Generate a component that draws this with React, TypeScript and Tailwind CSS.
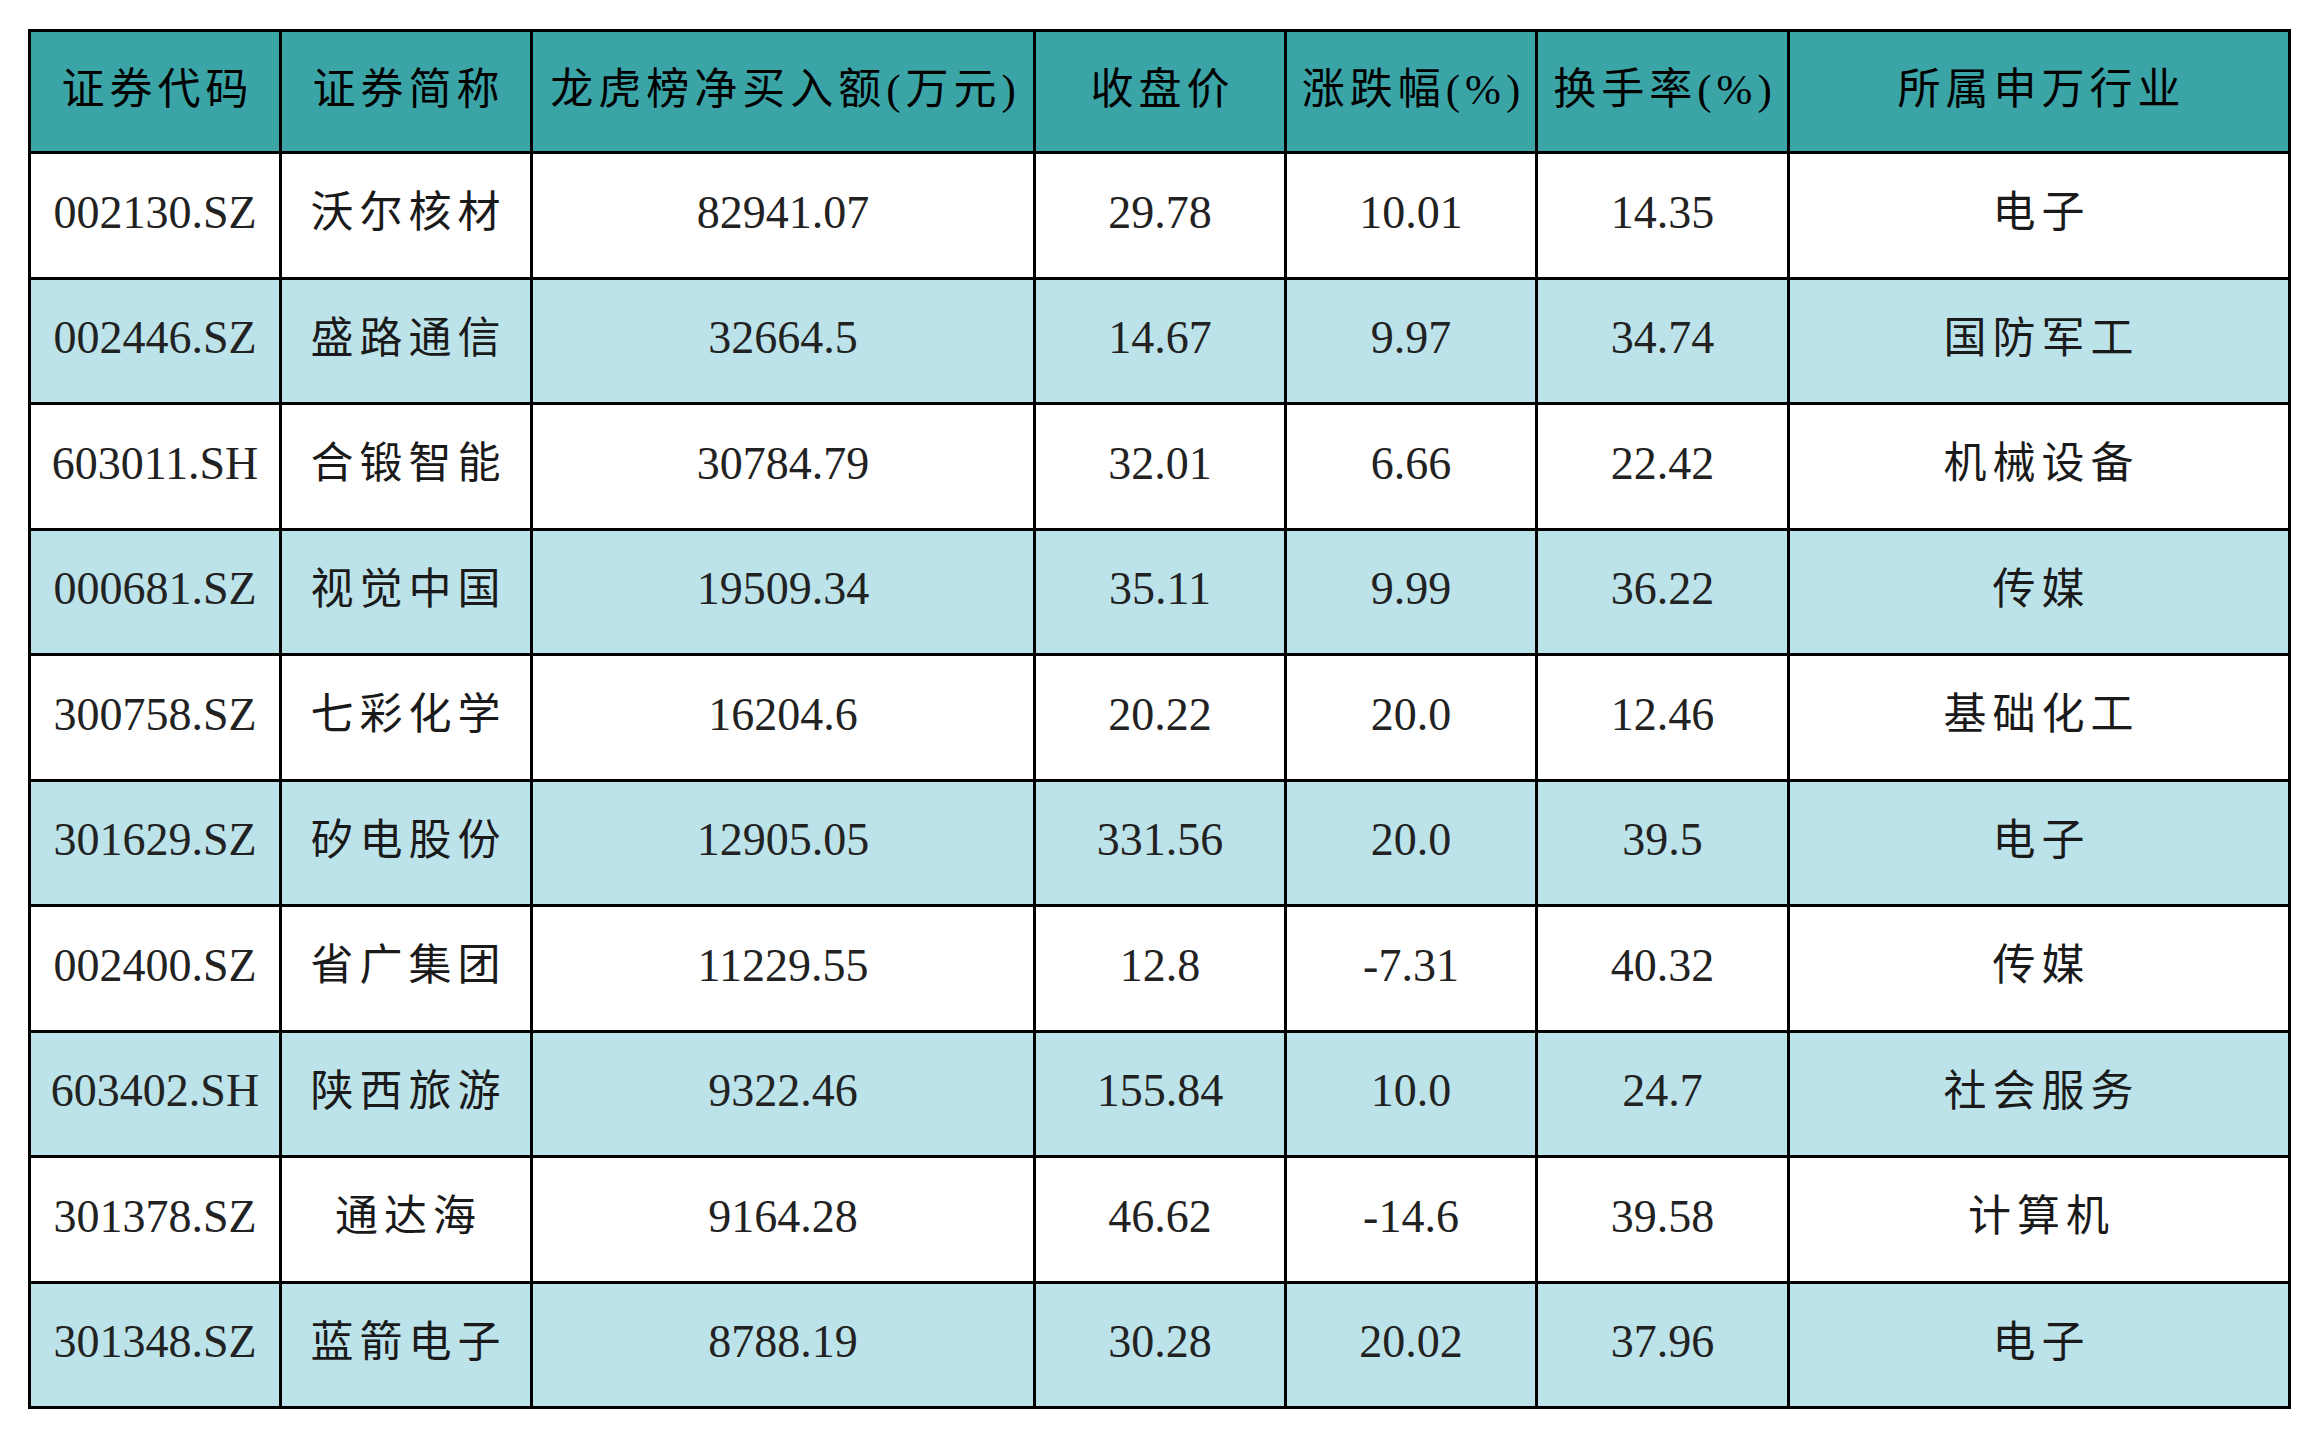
import type { ReactElement } from "react";

interface Row {
  readonly code: string;
  readonly name: string;
  readonly netBuy: string;
  readonly close: string;
  readonly change: string;
  readonly turnover: string;
  readonly industry: string;
}

const HEADERS = [
  "证券代码",
  "证券简称",
  "龙虎榜净买入额(万元)",
  "收盘价",
  "涨跌幅(%)",
  "换手率(%)",
  "所属申万行业",
];

const ROWS: readonly Row[] = [
  { code: "002130.SZ", name: "沃尔核材", netBuy: "82941.07", close: "29.78", change: "10.01", turnover: "14.35", industry: "电子" },
  { code: "002446.SZ", name: "盛路通信", netBuy: "32664.5", close: "14.67", change: "9.97", turnover: "34.74", industry: "国防军工" },
  { code: "603011.SH", name: "合锻智能", netBuy: "30784.79", close: "32.01", change: "6.66", turnover: "22.42", industry: "机械设备" },
  { code: "000681.SZ", name: "视觉中国", netBuy: "19509.34", close: "35.11", change: "9.99", turnover: "36.22", industry: "传媒" },
  { code: "300758.SZ", name: "七彩化学", netBuy: "16204.6", close: "20.22", change: "20.0", turnover: "12.46", industry: "基础化工" },
  { code: "301629.SZ", name: "矽电股份", netBuy: "12905.05", close: "331.56", change: "20.0", turnover: "39.5", industry: "电子" },
  { code: "002400.SZ", name: "省广集团", netBuy: "11229.55", close: "12.8", change: "-7.31", turnover: "40.32", industry: "传媒" },
  { code: "603402.SH", name: "陕西旅游", netBuy: "9322.46", close: "155.84", change: "10.0", turnover: "24.7", industry: "社会服务" },
  { code: "301378.SZ", name: "通达海", netBuy: "9164.28", close: "46.62", change: "-14.6", turnover: "39.58", industry: "计算机" },
  { code: "301348.SZ", name: "蓝箭电子", netBuy: "8788.19", close: "30.28", change: "20.02", turnover: "37.96", industry: "电子" },
];

const FONT = "font-['Liberation_Serif','Noto_Sans_CJK_SC',serif]";

function NumCell({ value, striped }: { value: string; striped: boolean }): ReactElement {
  return (
    <div
      className={`flex items-center justify-center pb-[6px] text-[46px] text-[#222] ${FONT} ${
        striped ? "bg-[#bce3e9]" : "bg-white"
      }`}
    >
      {value}
    </div>
  );
}

function TextCell({ value, striped }: { value: string; striped: boolean }): ReactElement {
  return (
    <div
      className={`flex items-center justify-center pb-[4px] pl-[5px] text-[43px] tracking-[6px] text-[#1a1a1a] ${FONT} ${
        striped ? "bg-[#bce3e9]" : "bg-white"
      }`}
    >
      {value}
    </div>
  );
}

export default function App(): ReactElement {
  return (
    <div className="min-h-screen bg-white pt-[29px] pl-[28px]">
      <div className="grid w-fit grid-cols-[248px_248px_500px_248px_248px_249px_498px] grid-rows-[119px_repeat(10,122.5px)] gap-[3px] bg-black p-[3px]">
        {HEADERS.map((title) => (
          <div
            key={title}
            className={`flex items-center justify-center bg-[#3aa4a6] pb-[2px] pl-[5px] text-[43px] tracking-[5px] text-black ${FONT}`}
          >
            {title}
          </div>
        ))}
        {ROWS.map((row, i) => {
          const striped = i % 2 === 1;
          return [
            <NumCell key={`${row.code}-code`} value={row.code} striped={striped} />,
            <TextCell key={`${row.code}-name`} value={row.name} striped={striped} />,
            <NumCell key={`${row.code}-net`} value={row.netBuy} striped={striped} />,
            <NumCell key={`${row.code}-close`} value={row.close} striped={striped} />,
            <NumCell key={`${row.code}-chg`} value={row.change} striped={striped} />,
            <NumCell key={`${row.code}-turn`} value={row.turnover} striped={striped} />,
            <TextCell key={`${row.code}-ind`} value={row.industry} striped={striped} />,
          ];
        })}
      </div>
    </div>
  );
}
